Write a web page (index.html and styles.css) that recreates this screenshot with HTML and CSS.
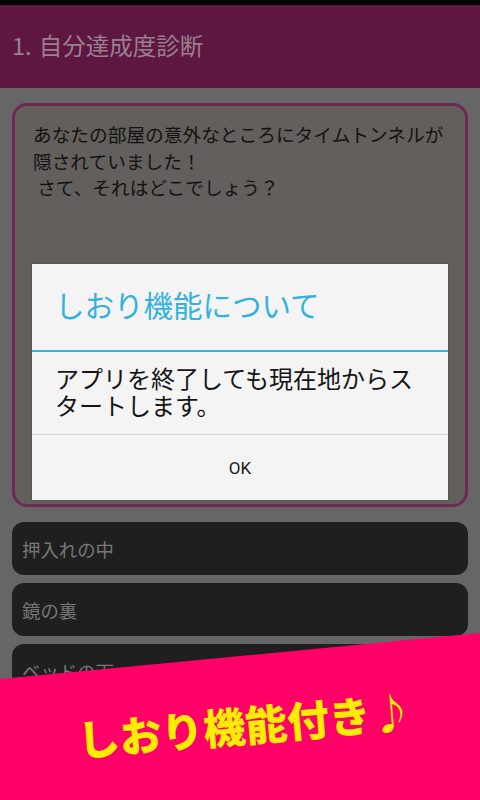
FILE: index.html
```html
<!DOCTYPE html>
<html lang="ja">
<head>
<meta charset="utf-8">
<title>自分達成度診断</title>
<link rel="stylesheet" href="styles.css">
</head>
<body>
<div class="screen">
  <div class="statusbar"></div>
  <header class="appbar"><h1 class="appbar-title">1. 自分達成度診断</h1></header>
  <main class="content">
    <section class="question"><p class="question-text">あなたの部屋の意外なところにタイムトンネルが
隠されていました！
 さて、それはどこでしょう？</p></section>
    <div class="choice">押入れの中</div>
    <div class="choice">鏡の裏</div>
    <div class="choice">ベッドの下</div>
  </main>

  <div class="dialog">
    <div class="dialog-title">しおり機能について</div>
    <div class="dialog-rule"></div>
    <div class="dialog-body"><p class="dialog-line">アプリを終了しても現在地からス</p><p class="dialog-line">タートします。</p></div>
    <div class="dialog-actions"><span class="dialog-ok">OK</span></div>
  </div>

  <div class="banner"></div>
  <div class="banner-text">しおり機能付き♪</div>
</div>
</body>
</html>
```

FILE: styles.css
```css
html, body {
  margin: 0;
  padding: 0;
  background: #666666;
}
.screen {
  position: relative;
  width: 480px;
  height: 800px;
  overflow: hidden;
  background: #666666;
  font-family: "Noto Sans CJK JP", "Noto Sans", Roboto, sans-serif;
}
.statusbar {
  height: 5px;
  background: #050505;
}
.appbar {
  height: 83px;
  background: #5e1741;
  display: flex;
  align-items: center;
  padding: 0 12px;
  box-sizing: border-box;
}
.appbar-title {
  margin: 0;
  font-size: 23.5px;
  font-weight: normal;
  color: #9a7f90;
  line-height: 1;
  margin-top: -2px;
  word-spacing: 2px;
}
.content {
  display: flex;
  flex-direction: column;
  gap: 8px;
  padding: 15px 12px 0;
}
.question {
  height: 404px;
  box-sizing: border-box;
  border: 3px solid #6c2a52;
  border-radius: 15px;
  background: #625f5c;
  padding: 15px 10px 0 18px;
  margin-bottom: 7px;
}
.question-text {
  margin: 0;
  white-space: pre;
  font-size: 18.7px;
  line-height: 26.5px;
  color: #121212;
}
.choice {
  height: 53px;
  border-radius: 12px;
  background: #1f1f1f;
  color: #777777;
  font-size: 18.4px;
  display: flex;
  align-items: center;
  padding: 0 10px;
  flex-shrink: 0;
}

/* dialog over content */
.dialog {
  position: absolute;
  left: 32px;
  top: 264px;
  width: 416px;
  height: 236px;
  background: #f4f4f4;
  display: flex;
  flex-direction: column;
  box-shadow: 0 0 2px rgba(0,0,0,0.3);
}
.dialog-title {
  height: 86px;
  box-sizing: border-box;
  padding: 20px 0 0 23px;
  font-size: 29.5px;
  line-height: 40px;
  color: #33b2e0;
}
.dialog-rule {
  height: 2px;
  background: #33b2e0;
}
.dialog-body {
  height: 83px;
  box-sizing: border-box;
  padding: 14px 0 0 23px;
  border-bottom: 1px solid #d9d9d9;
}
.dialog-line {
  margin: 0;
  font-family: "Liberation Sans", "Noto Sans CJK JP", sans-serif;
  font-size: 24px;
  line-height: 27px;
  height: 27px;
  color: #151515;
  white-space: nowrap;
}
.dialog-actions {
  flex: 1;
  display: flex;
  align-items: center;
  justify-content: center;
}
.dialog-ok {
  font-size: 17px;
  color: #1a1a1a;
  font-family: Roboto, "Noto Sans", sans-serif;
  margin-top: 1px;
}

/* promo banner over content */
.banner {
  position: absolute;
  left: 0;
  top: 630px;
  width: 480px;
  height: 170px;
  background: #ff0068;
  clip-path: polygon(0 49px, 100% 3px, 100% 100%, 0 100%);
}
.banner-text {
  position: absolute;
  left: 45px;
  top: 698px;
  width: 400px;
  text-align: center;
  font-size: 42px;
  line-height: 52px;
  font-weight: 900;
  color: #ffec00;
  transform: rotate(-5deg);
  white-space: nowrap;
}
```
